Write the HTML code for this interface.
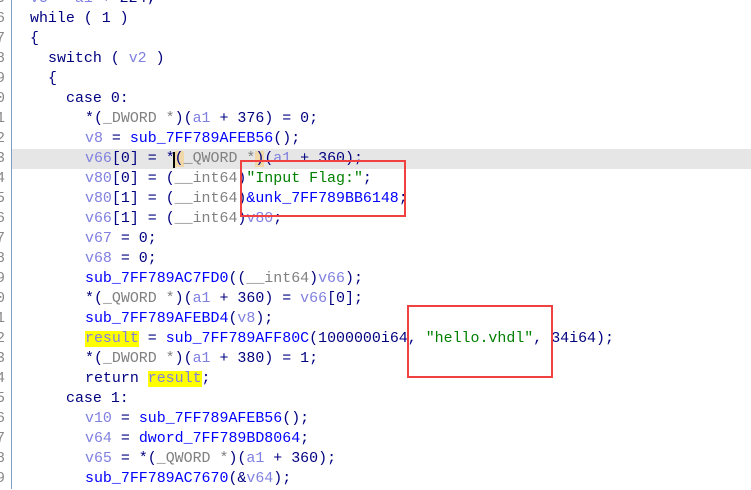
<!DOCTYPE html>
<html><head><style>
body{margin:0;width:751px;height:489px;overflow:hidden;background:#fff;position:relative;font-family:"Liberation Mono",monospace;font-size:14.95px;}
.g{position:absolute;left:0;top:0;width:11px;height:489px;border-right:1px solid #7f9cc8;overflow:hidden;}
.g div{position:absolute;left:-4px;height:20px;line-height:20px;color:#888;font-size:15px}
.hl{position:absolute;left:12px;right:0;top:149px;height:20px;background:#e6e6e6}
.l{position:absolute;left:0;height:20px;line-height:21px;white-space:pre;color:#000080}
.v{color:#8080e0}.f{color:#0000ff}.s{color:#008000}.t{color:#808080}.y{background:#ffff00}
.c{background:#f0d8a8}
.box{position:absolute;border:2px solid #f04040}
</style></head><body>
<div class="hl"></div>
<div class="g">
<div style="top:-11px">5</div><div style="top:9px">6</div><div style="top:29px">7</div><div style="top:49px">8</div><div style="top:69px">9</div><div style="top:89px">0</div><div style="top:109px">1</div><div style="top:129px">2</div><div style="top:149px">3</div><div style="top:169px">4</div><div style="top:189px">5</div><div style="top:209px">6</div><div style="top:229px">7</div><div style="top:249px">8</div><div style="top:269px">9</div><div style="top:289px">0</div><div style="top:309px">1</div><div style="top:329px">2</div><div style="top:349px">3</div><div style="top:369px">4</div><div style="top:389px">5</div><div style="top:409px">6</div><div style="top:429px">7</div><div style="top:449px">8</div><div style="top:469px">9</div>
</div>
<div class="l" style="top:-11px;left:30px"><span class="v">v5</span> = <span class="v">a1</span> + 224;</div>
<div class="l" style="top:9px;left:30px">while ( 1 )</div>
<div class="l" style="top:29px;left:30px">{</div>
<div class="l" style="top:49px;left:48px">switch ( <span class="v">v2</span> )</div>
<div class="l" style="top:69px;left:48px">{</div>
<div class="l" style="top:89px;left:66px">case 0:</div>
<div class="l" style="top:109px;left:85px">*(<span class="t">_DWORD *</span>)(<span class="v">a1</span> + 376) = 0;</div>
<div class="l" style="top:129px;left:85px"><span class="v">v8</span> = <span class="f">sub_7FF789AFEB56</span>();</div>
<div class="l" style="top:149px;left:85px"><span class="v">v66</span>[0] = *<span class="c">(</span><span class="t">_QWORD *</span><span class="c">)</span>(<span class="v">a1</span> + 360);</div>
<div style="position:absolute;left:173px;top:152px;width:2px;height:16px;background:#000"></div>
<div class="l" style="top:169px;left:85px"><span class="v">v80</span>[0] = (<span class="t">__int64</span>)<span class="s">"Input Flag:"</span>;</div>
<div class="l" style="top:189px;left:85px"><span class="v">v80</span>[1] = (<span class="t">__int64</span>)<span class="f">&amp;unk_7FF789BB6148</span>;</div>
<div class="l" style="top:209px;left:85px"><span class="v">v66</span>[1] = (<span class="t">__int64</span>)<span class="v">v80</span>;</div>
<div class="l" style="top:229px;left:85px"><span class="v">v67</span> = 0;</div>
<div class="l" style="top:249px;left:85px"><span class="v">v68</span> = 0;</div>
<div class="l" style="top:269px;left:85px"><span class="f">sub_7FF789AC7FD0</span>((<span class="t">__int64</span>)<span class="v">v66</span>);</div>
<div class="l" style="top:289px;left:85px">*(<span class="t">_QWORD *</span>)(<span class="v">a1</span> + 360) = <span class="v">v66</span>[0];</div>
<div class="l" style="top:309px;left:85px"><span class="f">sub_7FF789AFEBD4</span>(<span class="v">v8</span>);</div>
<div class="l" style="top:329px;left:85px"><span class="v y">result</span> = <span class="f">sub_7FF789AFF80C</span>(1000000i64, <span class="s">"hello.vhdl"</span>, 34i64);</div>
<div class="l" style="top:349px;left:85px">*(<span class="t">_DWORD *</span>)(<span class="v">a1</span> + 380) = 1;</div>
<div class="l" style="top:369px;left:85px">return <span class="v y">result</span>;</div>
<div class="l" style="top:389px;left:66px">case 1:</div>
<div class="l" style="top:409px;left:85px"><span class="v">v10</span> = <span class="f">sub_7FF789AFEB56</span>();</div>
<div class="l" style="top:429px;left:85px"><span class="v">v64</span> = <span class="f">dword_7FF789BD8064</span>;</div>
<div class="l" style="top:449px;left:85px"><span class="v">v65</span> = *(<span class="t">_QWORD *</span>)(<span class="v">a1</span> + 360);</div>
<div class="l" style="top:469px;left:85px"><span class="f">sub_7FF789AC7670</span>(&amp;<span class="v">v64</span>);</div>
<div class="box" style="left:240px;top:160px;width:162px;height:53px"></div>
<div class="box" style="left:407px;top:305px;width:142px;height:69px"></div>
</body></html>
